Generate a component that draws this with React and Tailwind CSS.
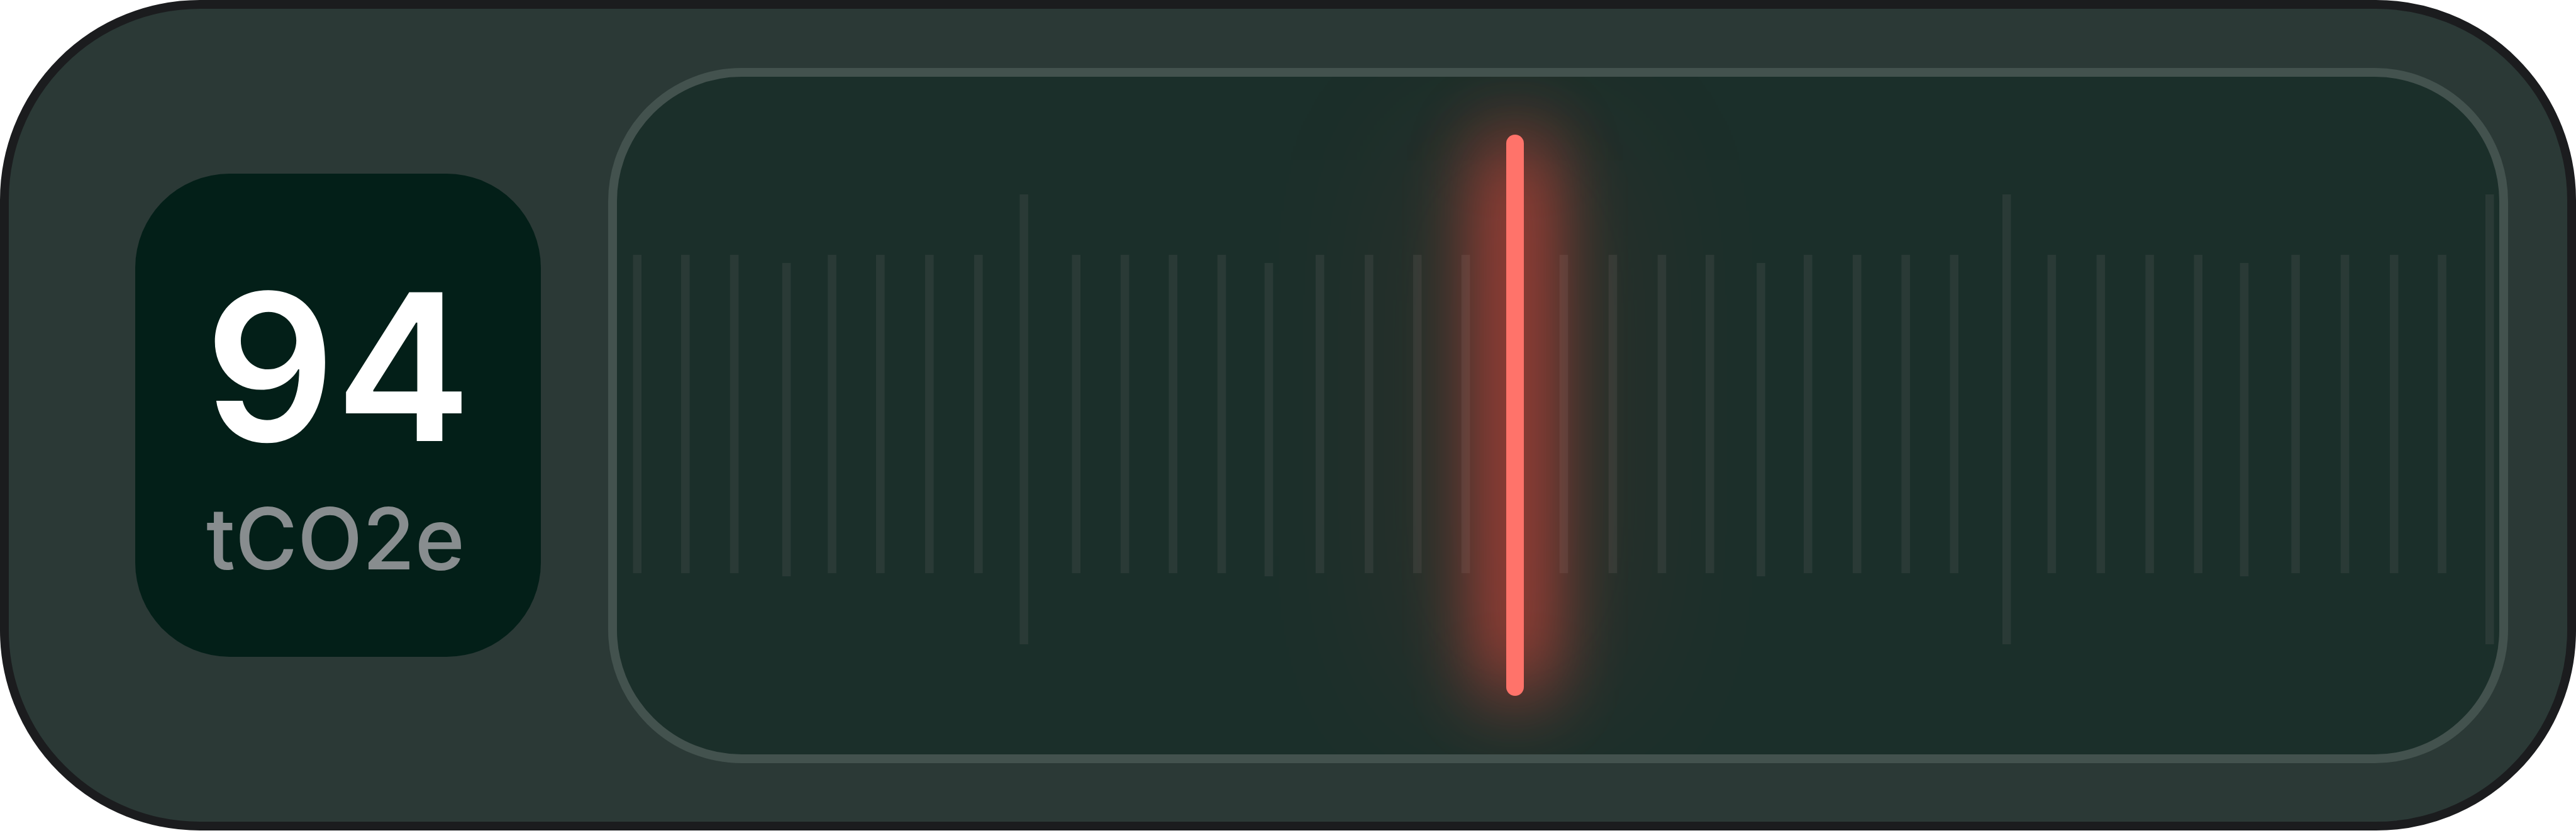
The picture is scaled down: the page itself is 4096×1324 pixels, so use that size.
import React from 'react';

// left edge of every tick on the scale
const TICKS = [
  { x: 1006.5 }, { x: 1083 }, { x: 1160.8 }, { x: 1243.8, type: 'mid' }, { x: 1316.2 },
  { x: 1393 }, { x: 1471 }, { x: 1549 }, { x: 1621.3, type: 'major' },
  { x: 1704.4 }, { x: 1781.8 }, { x: 1858.4 }, { x: 1935.8 }, { x: 2010.7, type: 'mid' },
  { x: 2092 }, { x: 2170 }, { x: 2246.9 }, { x: 2323.8 },
  { x: 2479.7 }, { x: 2557.7 }, { x: 2635.7 }, { x: 2712 }, { x: 2793.2, type: 'mid' },
  { x: 2868 }, { x: 2946 }, { x: 3023.4 }, { x: 3100.5 }, { x: 3183.9, type: 'major' },
  { x: 3255.6 }, { x: 3333.6 }, { x: 3411.3 }, { x: 3488.5 }, { x: 3561.7, type: 'mid' },
  { x: 3643.3 }, { x: 3721.8 }, { x: 3799.9 }, { x: 3876.2 }, { x: 3951.9, type: 'major' },
];

const TICK_SIZES = {
  minor: { y: 405, height: 506 },
  mid: { y: 418, height: 498 },
  major: { y: 309, height: 715 },
};

function ValueBadge({ value, unit }) {
  return (
    <div className="flex h-[768px] w-[645px] shrink-0 flex-col items-center gap-[44px] rounded-[150px] bg-[#031f18] pt-[144px]">
      <span className="text-[325px] leading-none font-semibold text-white">{value}</span>
      <span className="mr-[8px] text-[135px] leading-none font-medium text-[#888d8f]">{unit}</span>
    </div>
  );
}

function Scale() {
  return (
    <svg className="h-full w-full" viewBox="981 122 2993 1077" fill="#ffe4e6" fillOpacity="0.066">
      {TICKS.map((tick) => {
        const size = TICK_SIZES[tick.type || 'minor'];
        return <rect key={tick.x} x={tick.x} y={size.y} width="13.6" height={size.height} />;
      })}
    </svg>
  );
}

function Needle() {
  return (
    <div className="absolute top-[92px] left-[1414px] h-[892px] w-[28px]">
      {/* wide and tight glow behind the bar */}
      <div className="absolute inset-y-0 -inset-x-[150px] bg-[#ff4538] opacity-[0.09] blur-[135px]" />
      <div className="absolute inset-y-0 -inset-x-[26px] rounded-full bg-[#ff4a3f] opacity-90 blur-[63px]" />
      <div className="absolute inset-0 rounded-full bg-[#ff736a]" />
    </div>
  );
}

function Gauge() {
  return (
    <div className="relative h-[1105px] w-[3021px] shrink-0 overflow-hidden rounded-[212px] border-[14px] border-[#43524e] bg-[#1b2f2a]">
      <Needle />
      <div className="relative h-full w-full">
        <Scale />
      </div>
    </div>
  );
}

export default function App() {
  return (
    <div className="h-[1324px] w-[4096px] bg-white font-['Inter',sans-serif]">
      <div className="flex h-[1320px] w-full items-center gap-[107px] rounded-[318px] border-[14px] border-[#1b1c1e] bg-[#2b3936] pl-[201px]">
        <ValueBadge value="94" unit="tCO2e" />
        <Gauge />
      </div>
    </div>
  );
}
